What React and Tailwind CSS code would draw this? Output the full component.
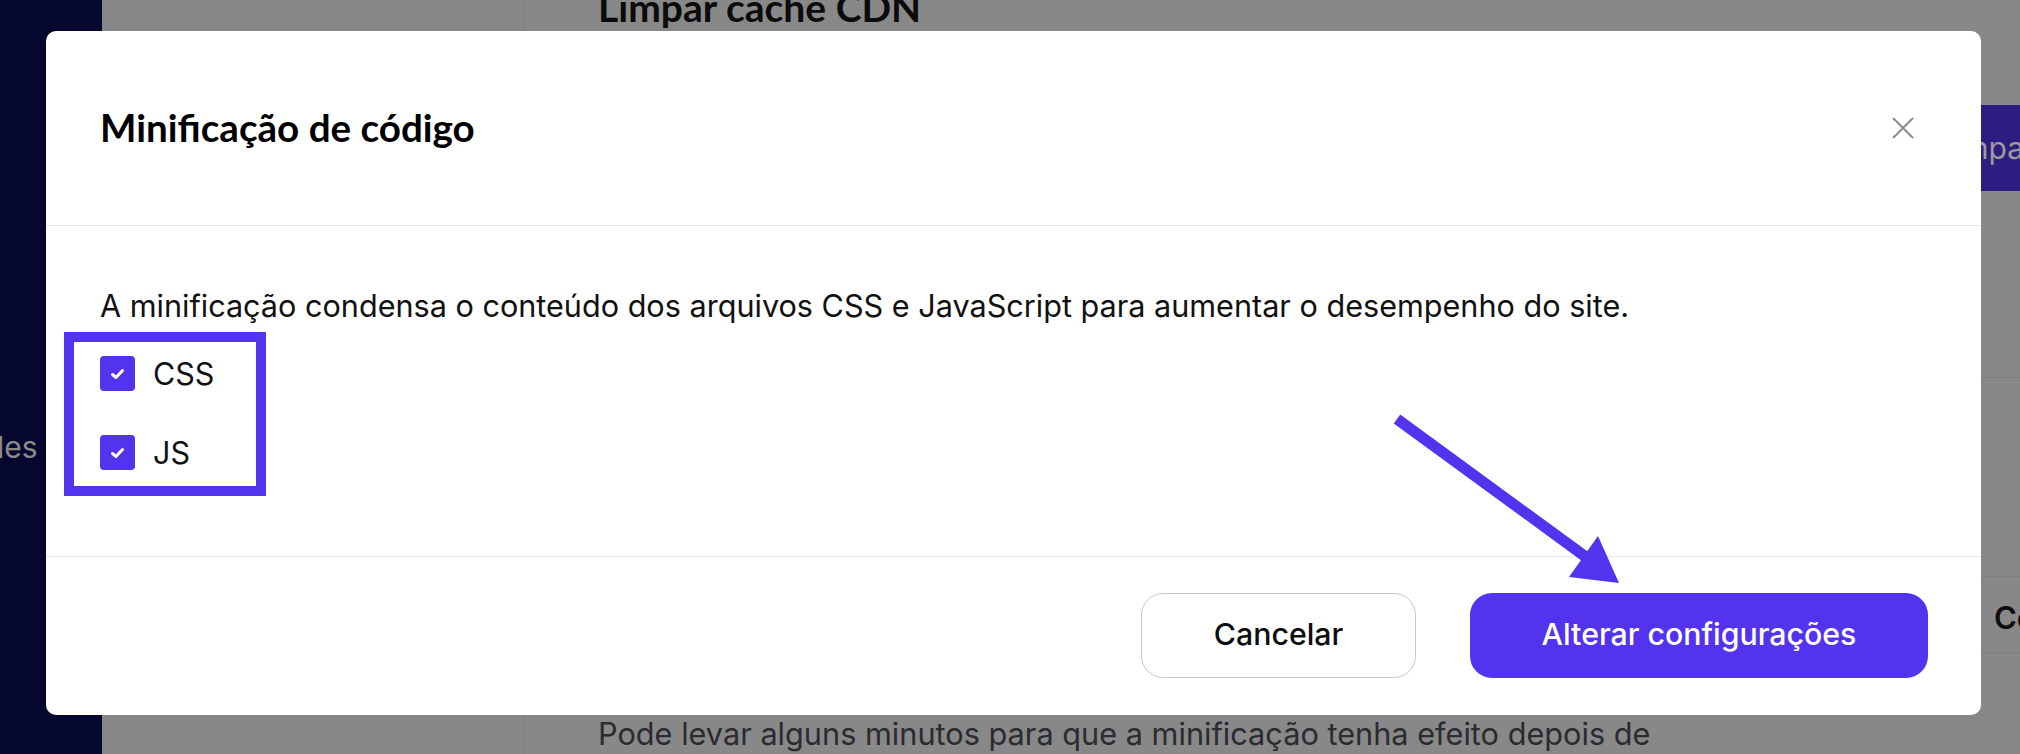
import React from "react";

const inter = { fontFamily: "Inter, 'Noto Sans', sans-serif" };

function Check() {
  return (
    <span className="flex h-[35px] w-[35px] items-center justify-center rounded-[4px] bg-[#5333ed]">
      <svg width="15" height="12" viewBox="0 0 15 12" fill="none">
        <path d="M2.5 6.5 L6 9.5 L12.5 2.5" stroke="white" strokeWidth="3" strokeLinecap="round" strokeLinejoin="round" />
      </svg>
    </span>
  );
}

export default function App() {
  return (
    <div className="relative h-[754px] w-[2020px] overflow-hidden bg-[#888888] font-['Inter',sans-serif]">
      {/* background page (dimmed) */}
      <div className="flex h-full w-full">
        <aside className="flex w-[102px] shrink-0 flex-col bg-[#06072f] pt-[427px]">
          <span className="-ml-[3px] text-[30px] leading-[40px] text-[#8b8b8b]">les</span>
        </aside>
        <div className="w-[422px] shrink-0 border-r border-[#7f7f7f] bg-[#878787]" />
        <main className="flex min-w-0 flex-1 flex-col pl-[74px]">
          <h2 className="-mt-[13px] font-['Lato',sans-serif] text-[39px] font-bold leading-[40px] text-[#0b0b0b]">
            Limpar cache CDN
          </h2>
          <div className="mt-[78px] flex justify-end">
            <div className="-mr-[80px] flex h-[86px] w-[180px] items-center rounded-l-[6px] bg-[#2e1d80] pl-[18px] text-[30px] text-[#9c9c9c]">
              Limpar
            </div>
          </div>
          <div className="mt-[186px] h-px bg-[#7e7e7e]" />
          <div className="mt-[198px] h-px bg-[#7e7e7e]" />
          <div className="flex h-[84px] items-center justify-end pt-[8px]">
            <span className="-mr-[30px] w-[56px] text-[31px] font-semibold text-[#0d0d0d]">Co</span>
          </div>
          <div className="h-px bg-[#7e7e7e]" />
          <p className="mt-[61px] text-[30.7px] leading-[40px] text-[#2b2b30]">
            Pode levar alguns minutos para que a minificação tenha efeito depois de
          </p>
        </main>
      </div>

      {/* modal */}
      <div className="absolute left-[46px] top-[31px] flex h-[684px] w-[1935px] flex-col rounded-[10px] bg-white">
        <div className="flex h-[195px] shrink-0 items-center justify-between border-b border-[#e9e9e9] px-[54px]">
          <h1 className="font-['Lato',sans-serif] text-[38.6px] font-bold text-black">Minificação de código</h1>
          <svg width="24" height="24" viewBox="0 0 24 24" className="mr-[12px]">
            <path d="M2 2 L22 22 M22 2 L2 22" stroke="#8c8c8c" strokeWidth="2" />
          </svg>
        </div>
        <div className="relative flex h-[331px] shrink-0 flex-col border-b border-[#e9e9e9] px-[54px] pt-[60px]" style={inter}>
          <p className="text-[30.6px] leading-[40px] text-[#111]">
            A minificação condensa o conteúdo dos arquivos CSS e JavaScript para aumentar o desempenho do site.
          </p>
          <div className="mt-[30px] flex flex-col gap-[44px]">
            <label className="flex items-center gap-[18px] text-[30.5px] leading-[35px] text-[#111]">
              <Check />
              CSS
            </label>
            <label className="flex items-center gap-[18px] text-[30.5px] leading-[35px] text-[#111]">
              <Check />
              JS
            </label>
          </div>
          {/* highlight annotation */}
          <div className="pointer-events-none absolute left-[18px] top-[106px] h-[164px] w-[202px] border-[10px] border-[#5333ed]" />
        </div>
        <div className="flex flex-1 items-center justify-end gap-[54px] px-[53px] pb-[2px]" style={inter}>
          <button className="h-[85px] w-[275px] rounded-[22px] border border-[#c9c9c9] bg-white text-[30.3px] font-medium text-[#0d0d0d]">
            Cancelar
          </button>
          <button className="h-[85px] w-[458px] rounded-[22px] bg-[#5333ed] text-[30.3px] font-medium text-white">
            Alterar configurações
          </button>
        </div>
      </div>

      {/* arrow annotation */}
      <svg className="pointer-events-none absolute left-0 top-0" width="2020" height="754" viewBox="0 0 2020 754">
        <line x1="1397" y1="419" x2="1590" y2="560" stroke="#5333ed" strokeWidth="11" />
        <polygon points="1619,583 1598,536 1569,577" fill="#5333ed" />
      </svg>
    </div>
  );
}
